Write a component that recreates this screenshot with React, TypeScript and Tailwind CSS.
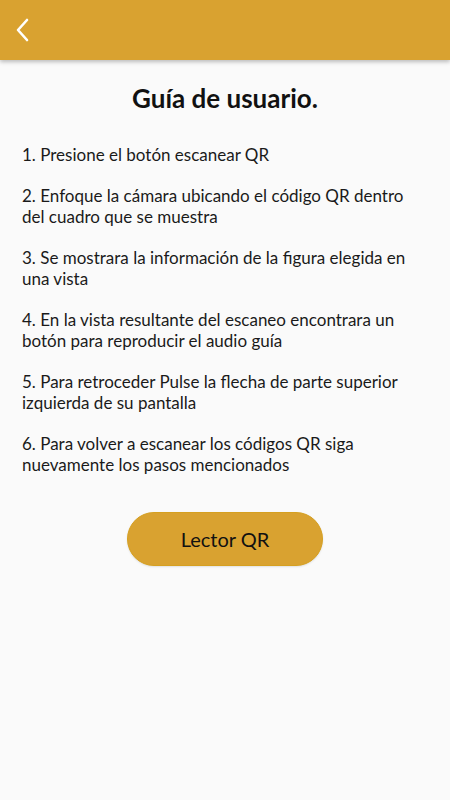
export default function App() {
  const items = [
    "1. Presione el botón escanear QR",
    "2. Enfoque la cámara ubicando el código QR dentro del cuadro que se muestra",
    "3. Se mostrara la información de la figura elegida en una vista",
    "4. En la vista resultante del escaneo encontrara un botón para reproducir el audio guía",
    "5. Para retroceder Pulse la flecha de parte superior izquierda de su pantalla",
    "6. Para volver a escanear los códigos QR siga nuevamente los pasos mencionados",
  ];
  return (
    <div className="w-[450px] h-[800px] bg-[#fafafa] flex flex-col" style={{ fontFamily: "Lato, 'Open Sans', sans-serif" }}>
      <div className="h-[60px] bg-[#d9a230] flex items-center px-[14px] shadow-[0_2px_4px_rgba(0,0,0,0.25)] relative z-10">
        <svg width="20" height="24" viewBox="0 0 20 24" fill="none">
          <path d="M13 2 L4 12 L13 22" stroke="white" strokeWidth="2.6" strokeLinecap="round" strokeLinejoin="round" />
        </svg>
      </div>
      <h1 className="text-[26px] font-bold text-[#111] text-center mt-[22px] leading-[32px]">Guía de usuario.</h1>
      <div className="flex flex-col gap-[20px] pl-[22px] pr-[28px] mt-[30px]">
        {items.map((t) => (
          <p key={t} className="text-[17px] leading-[21px] text-[#1a1a1a]">{t}</p>
        ))}
      </div>
      <div className="flex justify-center mt-[37px]">
        <button className="w-[196px] h-[54px] rounded-full bg-[#d9a230] border border-[#d6a020] text-[20px] text-[#111] shadow-[0_1px_2px_rgba(0,0,0,0.1)]">
          Lector QR
        </button>
      </div>
    </div>
  );
}
